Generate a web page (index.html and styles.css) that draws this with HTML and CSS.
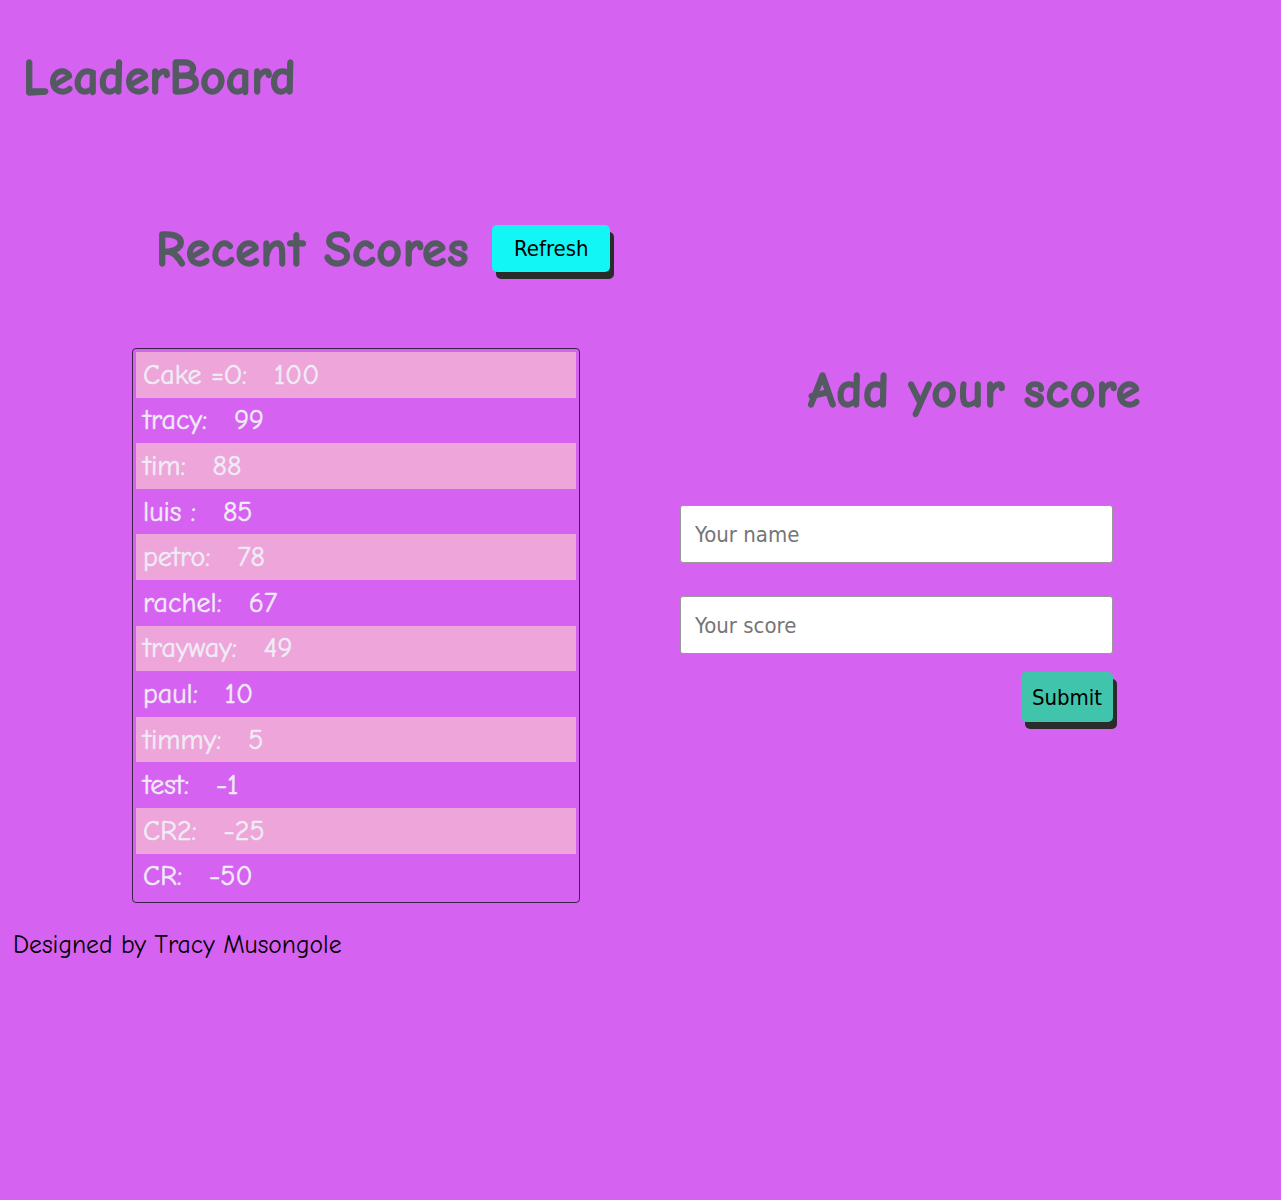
FILE: index.html
```html
<!DOCTYPE html>
<html lang="en">
<head>
<meta charset="utf-8">
<title>LeaderBoard</title>
<link rel="stylesheet" href="styles.css">
</head>
<body>
<header class="top">
  <h1 class="title">LeaderBoard</h1>
</header>
<main class="board">
  <section class="recent">
    <div class="recent-head">
      <h2 class="heading">Recent Scores</h2>
      <button class="btn btn-refresh" type="button">Refresh</button>
    </div>
    <ul class="scores">
      <li class="score"><span class="name">Cake =O:</span><span class="value">100</span></li>
      <li class="score"><span class="name">tracy:</span><span class="value">99</span></li>
      <li class="score"><span class="name">tim:</span><span class="value">88</span></li>
      <li class="score"><span class="name">luis :</span><span class="value">85</span></li>
      <li class="score"><span class="name">petro:</span><span class="value">78</span></li>
      <li class="score"><span class="name">rachel:</span><span class="value">67</span></li>
      <li class="score"><span class="name">trayway:</span><span class="value">49</span></li>
      <li class="score"><span class="name">paul:</span><span class="value">10</span></li>
      <li class="score"><span class="name">timmy:</span><span class="value">5</span></li>
      <li class="score"><span class="name">test:</span><span class="value">-1</span></li>
      <li class="score"><span class="name">CR2:</span><span class="value">-25</span></li>
      <li class="score"><span class="name">CR:</span><span class="value">-50</span></li>
    </ul>
  </section>
  <section class="add">
    <h2 class="heading heading-add">Add your score</h2>
    <form class="form">
      <input class="field" type="text" placeholder="Your name">
      <input class="field" type="text" placeholder="Your score">
      <button class="btn btn-submit" type="button">Submit</button>
    </form>
  </section>
</main>
<footer class="foot">Designed by Tracy Musongole</footer>
</body>
</html>
```

FILE: styles.css
```css
* { box-sizing: border-box; }

body {
  margin: 0;
  min-height: 1200px;
  background: #d562f1;
  font-family: "Comic Sans MS", "Comic Neue", cursive;
}

.top {
  padding: 50px 0 0 23px;
  height: 220px;
}

.title {
  margin: 0;
  font-size: 50px;
  line-height: 56px;
  font-weight: bold;
  white-space: nowrap;
  color: #545a61;
  -webkit-text-stroke: 1.3px #545a61;
}

.board {
  display: flex;
  align-items: flex-start;
  gap: 100px;
  padding-left: 132px;
}

.recent { width: 448px; }

.recent-head {
  display: flex;
  align-items: center;
  gap: 23px;
  padding-left: 24px;
  height: 60px;
}

.heading {
  margin: 0;
  font-size: 50px;
  line-height: 56px;
  font-weight: bold;
  letter-spacing: 0.7px;
  white-space: nowrap;
  color: #545a61;
  -webkit-text-stroke: 1.3px #545a61;
}

.btn {
  border: none;
  border-radius: 5px;
  font-family: "DejaVu Sans Condensed", "DejaVu Sans", sans-serif;
  font-size: 22px;
  color: #000;
  box-shadow: 4px 7px 0 #2b2b2b;
  cursor: pointer;
}

.btn-refresh {
  flex: none;
  background: #12f7f5;
  width: 118px;
  height: 47px;
  margin-top: -4px;
}

.scores {
  list-style: none;
  margin: 68px 0 0;
  padding: 3px;
  border: 1px solid #3a2244;
  border-radius: 4px;
}

.score {
  display: flex;
  gap: 27px;
  height: 45.6px;
  align-items: center;
  padding-left: 7px;
  font-size: 28px;
  color: #f0ecf6;
  -webkit-text-stroke: 0.5px #f0ecf6;
}

.score:nth-child(odd) { background: #eda5da; }

.add {
  width: 433px;
  padding-top: 143px;
}

.heading-add { padding-left: 128px; }

.form {
  display: flex;
  flex-direction: column;
  align-items: flex-end;
  margin-top: 86px;
}

.field {
  width: 100%;
  height: 58px;
  margin-bottom: 33px;
  padding: 0 14px;
  border: 1px solid #999;
  border-radius: 3px;
  background: #fff;
  font-family: "DejaVu Sans Condensed", "DejaVu Sans", sans-serif;
  font-size: 22px;
}

.field:last-of-type { margin-bottom: 18px; }

.field::placeholder { color: #767676; }

.btn-submit {
  background: #40c4ab;
  width: 92px;
  height: 50px;
}

.foot {
  padding: 27px 0 0 13px;
  font-size: 25.6px;
  color: #000;
}
```
